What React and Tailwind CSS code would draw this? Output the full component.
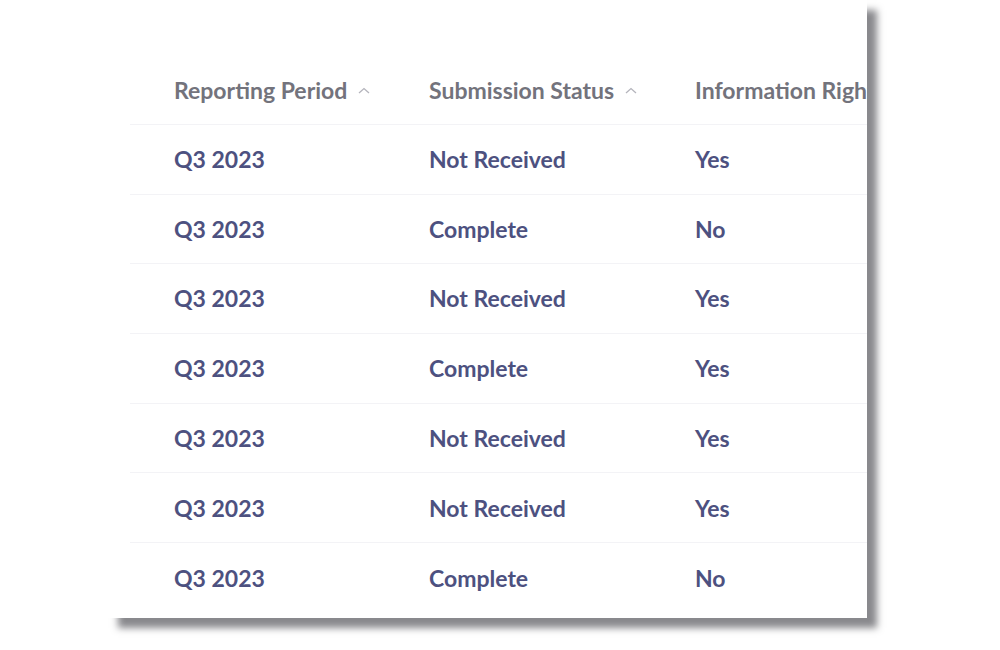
import React from 'react';

const rows = [
  { period: 'Q3 2023', status: 'Not Received', rights: 'Yes' },
  { period: 'Q3 2023', status: 'Complete', rights: 'No' },
  { period: 'Q3 2023', status: 'Not Received', rights: 'Yes' },
  { period: 'Q3 2023', status: 'Complete', rights: 'Yes' },
  { period: 'Q3 2023', status: 'Not Received', rights: 'Yes' },
  { period: 'Q3 2023', status: 'Not Received', rights: 'Yes' },
  { period: 'Q3 2023', status: 'Complete', rights: 'No' },
];

const Chevron = () => (
  <svg width="14" height="14" viewBox="0 0 14 14" className="ml-[10px] mt-[2px]">
    <path d="M2 9 L7 4.5 L12 9" fill="none" stroke="#b4b4bc" strokeWidth="1.3" />
  </svg>
);

const App = () => {
  return (
    <div className="w-[1000px] h-[650px] bg-white overflow-hidden font-['Lato','Liberation_Sans',sans-serif]">
      <div className="ml-[108px] w-[759px] h-[618px] bg-white shadow-[10px_10px_7px_rgba(40,40,48,0.55)] pt-[56px] overflow-hidden">
        <div className="pl-[22px]">
          <div className="flex items-center h-[69px] border-b border-[#f3f3f6] text-[23px] font-bold text-[#73737c]">
            <div className="w-[299px] shrink-0 pl-[44px] flex items-center">
              Reporting Period <Chevron />
            </div>
            <div className="w-[266px] shrink-0 flex items-center">
              Submission Status <Chevron />
            </div>
            <div className="whitespace-nowrap">Information Rights</div>
          </div>

          {rows.map((row, i) => (
            <div
              key={i}
              className={
                'flex items-center h-[69.7px] text-[23px] font-bold text-[#4d5180] ' +
                (i < rows.length - 1 ? 'border-b border-[#f3f3f6]' : '')
              }
            >
              <div className="w-[299px] shrink-0 pl-[44px]">{row.period}</div>
              <div className="w-[266px] shrink-0">{row.status}</div>
              <div>{row.rights}</div>
            </div>
          ))}
        </div>
      </div>
    </div>
  );
};

export default App;
